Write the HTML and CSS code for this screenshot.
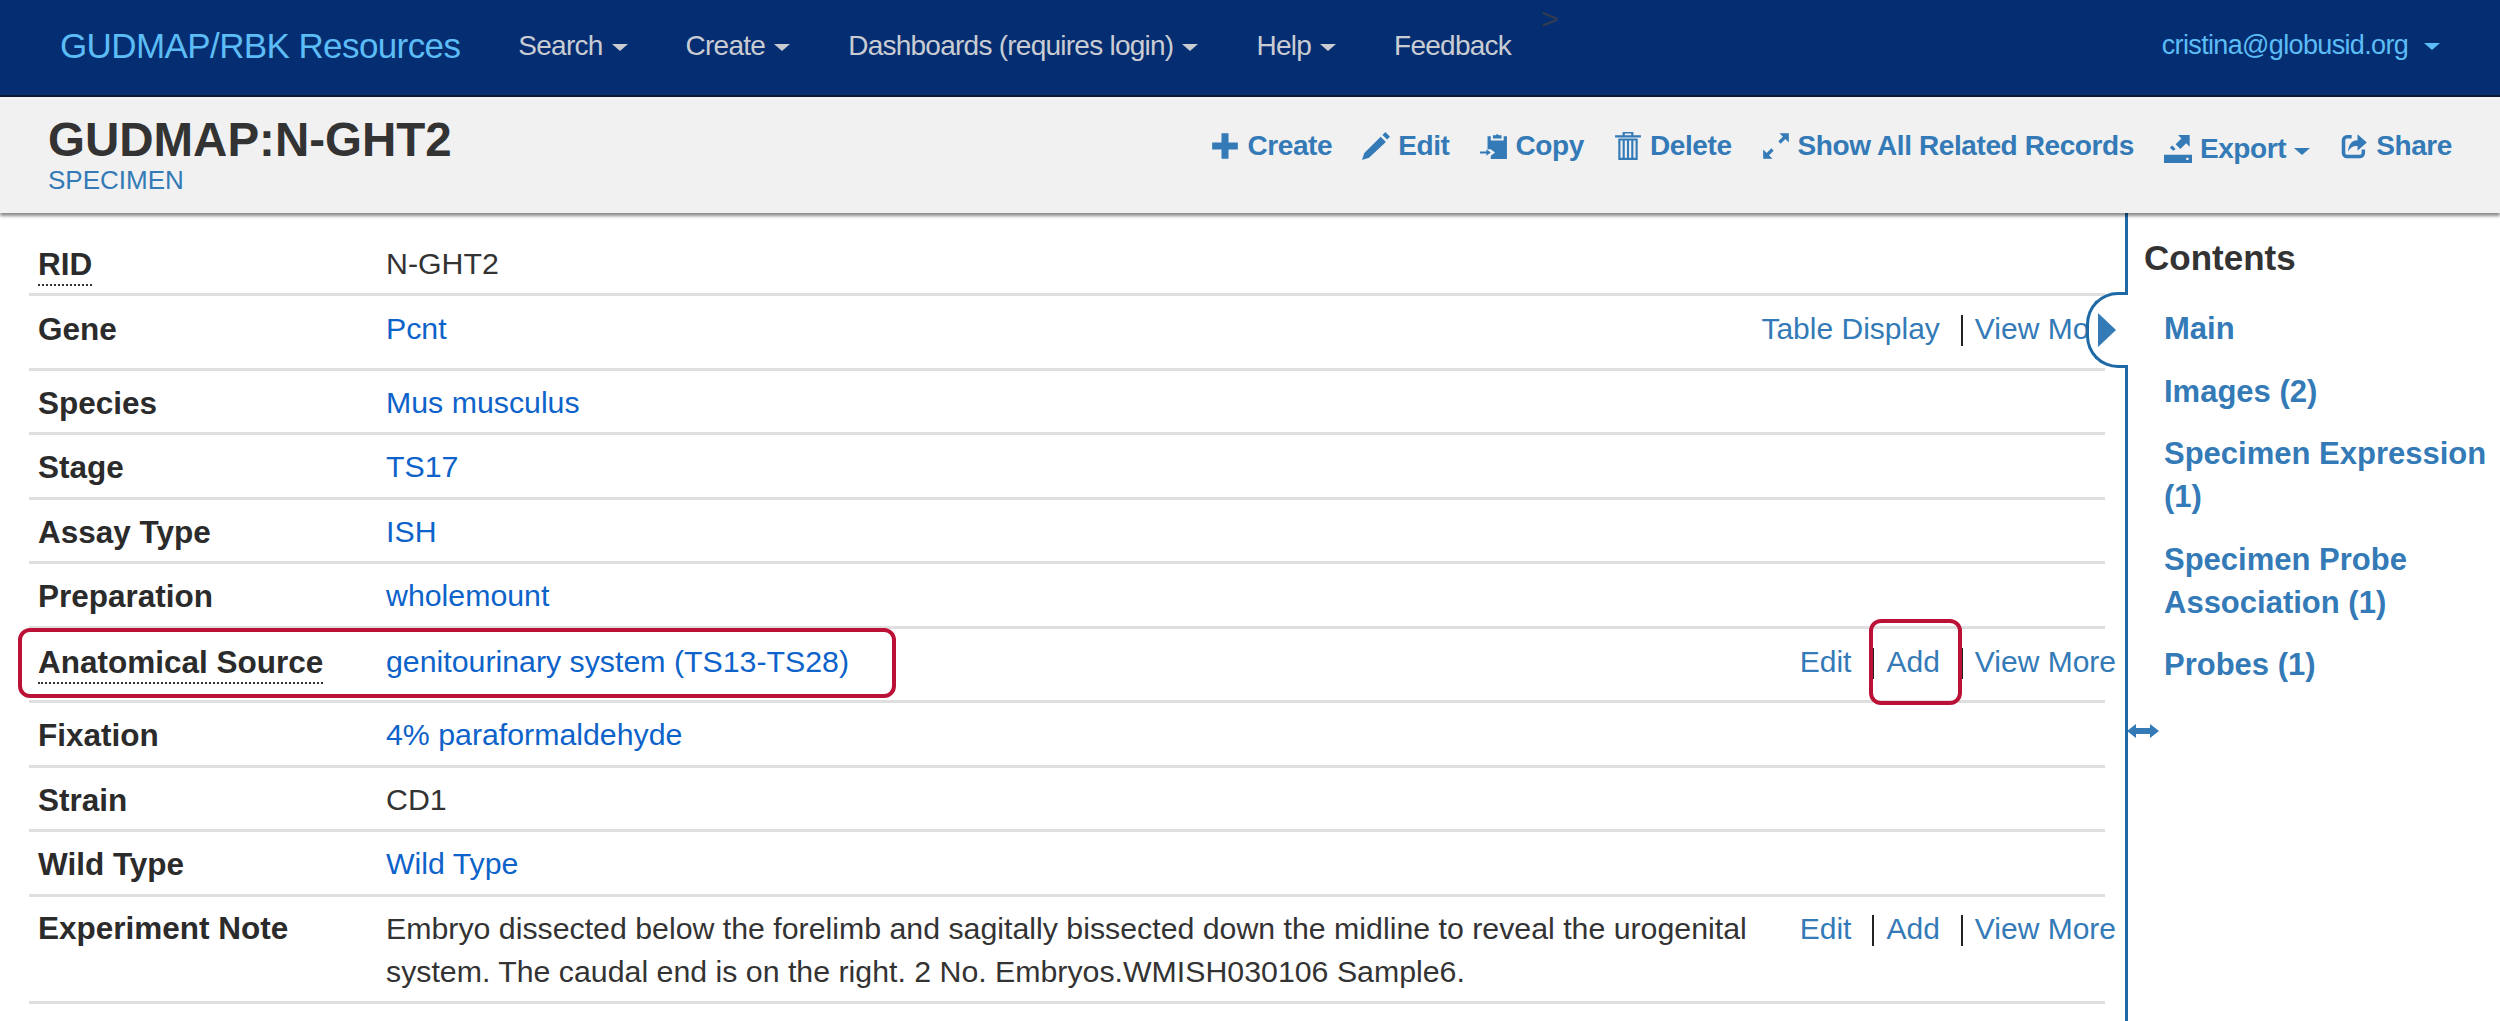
FILE: index.html
```html
<!DOCTYPE html>
<html lang="en">
<head>
    <meta charset="UTF-8">
    <title>GUDMAP:N-GHT2</title>
    <link rel="stylesheet" href="styles.css">
</head>
<body>

    <nav class="navbar">
        <a class="brand">GUDMAP/RBK Resources</a>
        <ul class="nav-menu">
            <li>Search <span class="caret"></span></li>
            <li>Create <span class="caret"></span></li>
            <li>Dashboards (requires login) <span class="caret"></span></li>
            <li>Help <span class="caret"></span></li>
            <li>Feedback</li>
        </ul>
        <span class="stray">&gt;</span>
        <a class="user">cristina@globusid.org <span class="caret"></span></a>
    </nav>

    <header class="title-bar">
        <div class="title-text">
            <h1>GUDMAP:N-GHT2</h1>
            <a class="table-name">SPECIMEN</a>
        </div>
        <div class="actions">
            <a><svg class="icon" viewBox="0 0 24 24"><path d="M9 1h6v8h8v6h-8v8H9v-8H1V9h8z"/></svg>Create</a>
            <a><svg class="icon" viewBox="0 0 24 24"><path d="M0 24l2-6L16 4l4.500 4.500L6 22zM17.500 2.500L20 0l4 4-2.500 2.500z"/></svg>Edit</a>
            <a><svg class="icon" viewBox="0 0 26 26"><path d="M7 4h3v4h12V4h3v21H10v-3l4-3-4-3H7zM12 6V3h2.500a2 2 0 0 1 3 0H20v3zM0 18h6v-2l4 3-4 3v-2H0z"/></svg>Copy</a>
            <a><svg class="icon" viewBox="0 0 24 26"><path fill-rule="evenodd" d="M0 3h7V0h10v3h7v2H0zM9 1.500V3h6V1.500zM3 6h18v20H3zM5 8v16h2V8zM9 8v16h2V8zM13 8v16h2V8zM17 8v16h2V8z"/></svg>Delete</a>
            <a><svg class="icon" viewBox="0 0 24 24"><path d="M15 1h8v8l-3-3-4 4-2-2 4-4zM1 23v-8l3 3 4-4 2 2-4 4 3 3z"/></svg>Show All Related Records</a>
            <a class="action-export"><svg class="icon" viewBox="0 0 24 24"><path fill-rule="evenodd" d="M12 0h10v10l-3-3-5 5-4-4 5-5zM7 9l3 3-2 1.500-3-2.500zM0 17h24v7H0zM19 19.500v2h2v-2z"/></svg>Export <span class="caret"></span></a>
            <a><svg class="icon" viewBox="0 0 24 24"><path class="outline" d="M10 4H6a3 3 0 0 0-3 3v11a3 3 0 0 0 3 3h11a3 3 0 0 0 3-3v-3"/><path d="M15 2l8 7-8 7v-4c-4 0-6 1-8 5 0-6 3-10 8-10z"/></svg>Share</a>
        </div>
    </header>

    <div class="page">
        <main class="record">
            <div class="row">
                <div class="label"><span class="dotted">RID</span></div>
                <div class="value">N-GHT2</div>
            </div>
            <div class="row row-tall">
                <div class="label">Gene</div>
                <div class="value"><a>Pcnt</a></div>
                <div class="row-links"><a>Table Display</a><i></i><a>View More</a></div>
            </div>
            <div class="row">
                <div class="label">Species</div>
                <div class="value"><a>Mus musculus</a></div>
            </div>
            <div class="row">
                <div class="label">Stage</div>
                <div class="value"><a>TS17</a></div>
            </div>
            <div class="row">
                <div class="label">Assay Type</div>
                <div class="value"><a>ISH</a></div>
            </div>
            <div class="row">
                <div class="label">Preparation</div>
                <div class="value"><a>wholemount</a></div>
            </div>
            <div class="row row-tall">
                <div class="label"><span class="dotted">Anatomical Source</span></div>
                <div class="value"><a>genitourinary system (TS13-TS28)</a></div>
                <div class="row-links"><a>Edit</a><i></i><a>Add</a><i></i><a>View More</a></div>
            </div>
            <div class="row">
                <div class="label">Fixation</div>
                <div class="value"><a>4% paraformaldehyde</a></div>
            </div>
            <div class="row">
                <div class="label">Strain</div>
                <div class="value">CD1</div>
            </div>
            <div class="row">
                <div class="label">Wild Type</div>
                <div class="value"><a>Wild Type</a></div>
            </div>
            <div class="row row-note">
                <div class="label">Experiment Note</div>
                <div class="value">Embryo dissected below the forelimb and sagitally bissected down the midline to reveal the urogenital system. The caudal end is on the right. 2 No. Embryos.WMISH030106 Sample6.</div>
                <div class="row-links"><a>Edit</a><i></i><a>Add</a><i></i><a>View More</a></div>
            </div>
        </main>

        <aside class="toc">
            <h2>Contents</h2>
            <a>Main</a>
            <a>Images (2)</a>
            <a>Specimen Expression (1)</a>
            <a>Specimen Probe Association (1)</a>
            <a>Probes (1)</a>
            <svg class="resize" viewBox="0 0 32 14"><path d="M0 7l9-7v4h14V0l9 7-9 7v-4H9v4z"/></svg>
        </aside>

        <div class="toc-toggle"><span class="toggle-arrow"></span></div>

        <!-- red annotation boxes -->
        <div class="mark mark-source"></div>
        <div class="mark mark-add"></div>
    </div>

</body>
</html>
```

FILE: styles.css
```css
* {
    box-sizing: border-box;
}

html, body {
    height: 100%;
}

body {
    margin: 0;
    overflow: hidden;
    font-family: "Liberation Sans", Arial, sans-serif;
    font-size: 30px;
    color: #2b2b2b;
    background: #fff;
}

ul {
    list-style: none;
    margin: 0;
    padding: 0;
}

.caret {
    display: inline-block;
    width: 0;
    height: 0;
    margin-left: 2px;
    vertical-align: middle;
    border-top: 7px solid currentColor;
    border-left: 8px solid transparent;
    border-right: 8px solid transparent;
}

/* top nav */
.navbar {
    position: relative;
    display: flex;
    align-items: center;
    height: 97px;
    padding: 0 60px 4px;
    background: #042e71;
    border-bottom: 2px solid #0b1a33;
}

.brand {
    font-size: 35px;
    color: #5cbcf6;
    letter-spacing: -0.6px;
}

.nav-menu {
    display: flex;
    gap: 58px;
    margin-left: 58px;
    font-size: 28px;
    letter-spacing: -0.75px;
    color: #c9ccd3;
}

.stray {
    position: absolute;
    top: 2px;
    left: 1541px;
    font-size: 30px;
    color: #343b50;
}

.user {
    margin-left: auto;
    font-size: 27px;
    letter-spacing: -0.65px;
    color: #5cbcf6;
}

.user .caret {
    margin-left: 9px;
}

/* record title */
.title-bar {
    position: relative;
    z-index: 2;
    display: flex;
    justify-content: space-between;
    height: 116px;
    padding: 17px 48px 0;
    background: #f1f1f1;
    box-shadow: 0 3px 3px rgba(0, 0, 0, 0.45);
}

.title-bar h1 {
    margin: 0;
    font-size: 47.500px;
    line-height: 51px;
    color: #333;
}

.table-name {
    display: block;
    font-size: 26px;
    line-height: 30px;
    color: #337ab7;
}

.actions {
    display: flex;
    gap: 30px;
    margin-top: 16px;
    font-size: 28px;
    font-weight: bold;
    letter-spacing: -0.4px;
    color: #337ab7;
}

.actions a {
    display: flex;
    align-items: center;
    height: 32px;
}

.actions .caret {
    margin: 4px 0 0 8px;
}

.actions .action-export {
    margin-top: 3px;
}

.icon {
    width: 28px;
    height: 28px;
    margin-right: 8px;
    fill: #337ab7;
}

.icon .outline {
    fill: none;
    stroke: #337ab7;
    stroke-width: 3;
}

/* record rows */
.page {
    position: relative;
    display: flex;
    height: 808px;
}

.record {
    width: 2125px;
    padding-left: 29px;
}

.row {
    display: flex;
    align-items: flex-start;
    width: 2076px;
    min-height: 64.5px;
    padding: 18px 0 0 9px;
    line-height: 28px;
    border-bottom: 3px solid #dfdfdf;
}

.row:first-child {
    min-height: 83px;
    padding-top: 37px;
}

.row-tall {
    min-height: 74.5px;
    padding-top: 19px;
}

.row-note {
    min-height: 107px;
    line-height: 43px;
    padding-top: 10px;
}

.label {
    flex: 0 0 348px;
    font-size: 31.500px;
    font-weight: bold;
}

.dotted {
    padding-bottom: 2px;
    border-bottom: 2px dotted #333;
}

.value {
    flex: 1;
    font-size: 30.300px;
    color: #333;
}

.value a {
    color: #0d63c9;
}

.row-links {
    display: flex;
    align-items: flex-start;
    justify-content: flex-end;
    margin-right: -11px;
    margin-left: 50px;
    white-space: nowrap;
    color: #337ab7;
}

.row-links i {
    width: 2px;
    height: 31px;
    margin: 0 12px 0 21px;
    background: #222;
}

.row-note .row-links i {
    margin-top: 8px;
}

/* contents side panel */
.toc {
    flex: 1;
    padding: 24px 0 0 16px;
    border-left: 3px solid #1d69a6;
    color: #337ab7;
    font-size: 31px;
    font-weight: bold;
}

.toc h2 {
    margin: 0 0 28px;
    font-size: 35px;
    line-height: 42px;
    color: #333;
}

.toc a {
    display: block;
    margin: 0 0 19.500px 20px;
    line-height: 43px;
}

.resize {
    display: block;
    width: 32px;
    height: 14px;
    margin: 38px 0 0 -17px;
    fill: #337ab7;
}

/* overlays */
.toc-toggle {
    position: absolute;
    top: 79px;
    left: 2086px;
    width: 42px;
    height: 76px;
    background: #fff;
    border: 3px solid #1d69a6;
    border-right: 0;
    border-radius: 32px 0 0 32px;
}

.toggle-arrow {
    position: absolute;
    top: 18px;
    left: 9px;
    border-left: 18px solid #337ab7;
    border-top: 17px solid transparent;
    border-bottom: 17px solid transparent;
}

.mark {
    position: absolute;
    border: 4px solid #bc1136;
    border-radius: 12px;
}

.mark-source {
    top: 415px;
    left: 18px;
    width: 878px;
    height: 70px;
}

.mark-add {
    top: 406px;
    left: 1869px;
    width: 93px;
    height: 86px;
}
```
